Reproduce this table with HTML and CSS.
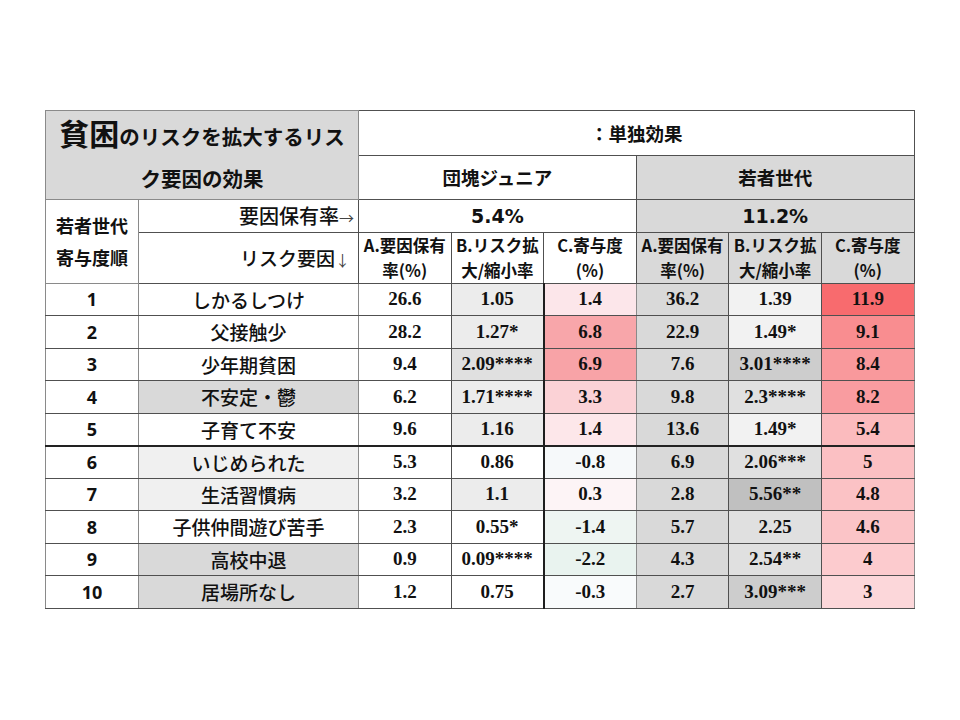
FILE: index.html
```html
<!DOCTYPE html>
<html lang="ja">
<head>
<meta charset="utf-8">
<link rel="stylesheet" href="styles.css">
</head>
<body>
<div class="page">
<table class="risk">
  <colgroup>
    <col class="c-rank"><col class="c-factor">
    <col class="c-val"><col class="c-val"><col class="c-val">
    <col class="c-val"><col class="c-val"><col class="c-val">
  </colgroup>
  <tr class="r-top">
    <th class="title g" colspan="2" rowspan="2"><span class="big">貧困</span>のリスクを拡大するリス<br>ク要因の効果</th>
    <th class="hd" colspan="6">：単独効果</th>
  </tr>
  <tr class="r-gen">
    <th class="hd" colspan="3">団塊ジュニア</th>
    <th class="hd g" colspan="3">若者世代</th>
  </tr>
  <tr class="r-rate">
    <th class="rank-hd" rowspan="2">若者世代<br>寄与度順</th>
    <th class="lab">要因保有率<span class="arr">→</span></th>
    <th class="pct" colspan="3">5.4%</th>
    <th class="pct g" colspan="3">11.2%</th>
  </tr>
  <tr class="r-cols">
    <th class="lab lab2">リスク要因<span class="arr">↓</span></th>
    <th class="ch">A.要因保有<br>率(%)</th>
    <th class="ch">B.リスク拡<br>大/縮小率</th>
    <th class="ch">C.寄与度<br>(%)</th>
    <th class="ch g">A.要因保有<br>率(%)</th>
    <th class="ch g">B.リスク拡<br>大/縮小率</th>
    <th class="ch g">C.寄与度<br>(%)</th>
  </tr>
  <tr>
    <td class="rank">1</td><td class="fac">しかるしつけ</td>
    <td class="num">26.6</td><td class="num b1">1.05</td><td class="num" style="background:#fce6ea">1.4</td>
    <td class="num g">36.2</td><td class="num b0">1.39</td><td class="num" style="background:#f86b6e">11.9</td>
  </tr>
  <tr>
    <td class="rank">2</td><td class="fac">父接触少</td>
    <td class="num">28.2</td><td class="num b1">1.27*</td><td class="num" style="background:#f8a6aa">6.8</td>
    <td class="num g">22.9</td><td class="num b0">1.49*</td><td class="num" style="background:#f98d90">9.1</td>
  </tr>
  <tr>
    <td class="rank">3</td><td class="fac">少年期貧困</td>
    <td class="num">9.4</td><td class="num b2">2.09****</td><td class="num" style="background:#f8a3a7">6.9</td>
    <td class="num g">7.6</td><td class="num b3">3.01****</td><td class="num" style="background:#f9999c">8.4</td>
  </tr>
  <tr>
    <td class="rank">4</td><td class="fac g">不安定・鬱</td>
    <td class="num">6.2</td><td class="num b1">1.71****</td><td class="num" style="background:#fbd2d6">3.3</td>
    <td class="num g">9.8</td><td class="num b2">2.3****</td><td class="num" style="background:#f99ca0">8.2</td>
  </tr>
  <tr class="sep">
    <td class="rank">5</td><td class="fac">子育て不安</td>
    <td class="num">9.6</td><td class="num b1">1.16</td><td class="num" style="background:#fde7ea">1.4</td>
    <td class="num g">13.6</td><td class="num b0">1.49*</td><td class="num" style="background:#fbbbbe">5.4</td>
  </tr>
  <tr>
    <td class="rank">6</td><td class="fac lg">いじめられた</td>
    <td class="num">5.3</td><td class="num">0.86</td><td class="num" style="background:#f6f9fa">-0.8</td>
    <td class="num g">6.9</td><td class="num b2">2.06***</td><td class="num" style="background:#fbc0c3">5</td>
  </tr>
  <tr>
    <td class="rank">7</td><td class="fac lg">生活習慣病</td>
    <td class="num">3.2</td><td class="num b1">1.1</td><td class="num" style="background:#fdf4f6">0.3</td>
    <td class="num g">2.8</td><td class="num b4">5.56**</td><td class="num" style="background:#fbc2c5">4.8</td>
  </tr>
  <tr>
    <td class="rank">8</td><td class="fac">子供仲間遊び苦手</td>
    <td class="num">2.3</td><td class="num">0.55*</td><td class="num" style="background:#eef5f2">-1.4</td>
    <td class="num g">5.7</td><td class="num b2">2.25</td><td class="num" style="background:#fbc4c7">4.6</td>
  </tr>
  <tr>
    <td class="rank">9</td><td class="fac g">高校中退</td>
    <td class="num">0.9</td><td class="num">0.09****</td><td class="num" style="background:#e9f3ef">-2.2</td>
    <td class="num g">4.3</td><td class="num b2">2.54**</td><td class="num" style="background:#fccbce">4</td>
  </tr>
  <tr>
    <td class="rank">10</td><td class="fac g">居場所なし</td>
    <td class="num">1.2</td><td class="num">0.75</td><td class="num" style="background:#f9fbfc">-0.3</td>
    <td class="num g">2.7</td><td class="num b3">3.09***</td><td class="num" style="background:#fcd7da">3</td>
  </tr>
</table>
</div>
</body>
</html>
```

FILE: styles.css
```css
html, body {
  margin: 0;
  padding: 0;
  background: #ffffff;
}
.page {
  padding: 110px 0 0 45px;
}
.risk {
  border-collapse: collapse;
  table-layout: fixed;
  width: 869px;
  font-family: "Noto Sans CJK JP", "Noto Sans", sans-serif;
  color: #111;
}
.c-rank { width: 93px; }
.c-factor { width: 220px; }
.c-val { width: 92.6px; }

.risk th, .risk td {
  border: 1px solid #505050;
  padding: 0;
  text-align: center;
  vertical-align: middle;
  overflow: hidden;
  white-space: nowrap;
}
.g { background: #d9d9d9; }
.lg { background: #f0f0f0; }

.r-top { height: 45px; }
.r-gen { height: 43px; }
.r-rate { height: 32px; }
.r-cols { height: 53px; }
.risk tr { height: 32.5px; }

.title {
  font-size: 20.5px;
  font-weight: 700;
  line-height: 42px;
  border-color: #8a8a8a !important;
}
.title .big { font-size: 30px; }
.hd {
  font-size: 18.5px;
  font-weight: 700;
}
.pct {
  font-family: "DejaVu Sans", "Liberation Sans", sans-serif;
  font-size: 19px;
  font-weight: 700;
}
.rank-hd {
  font-size: 18px;
  font-weight: 700;
  line-height: 32px;
  border-color: #8a8a8a !important;
}
.lab {
  text-align: right !important;
  font-size: 20px;
  font-weight: 500;
  padding-right: 4px !important;
  border-left-color: #8a8a8a !important;
}
.lab2 { font-size: 19px; padding-right: 8px !important; }
.arr {
  font-size: 15px;
  font-weight: 400;
  color: #444;
}
.ch {
  font-size: 16.5px;
  font-weight: 700;
  line-height: 25px;
}
.rank {
  font-size: 18px;
  font-weight: 700;
  font-family: "Open Sans", "Noto Sans", sans-serif;
}
.fac {
  font-size: 19px;
  font-weight: 500;
}
.num {
  font-family: "Liberation Serif", "Times New Roman", serif;
  font-size: 19px;
  font-weight: 700;
}
.b0 { background: #f2f2f2; }
.b1 { background: #ececec; }
.b2 { background: #e0e0e0; }
.b3 { background: #cdcdcd; }
.b4 { background: #c0c0c0; }

.risk td:nth-child(1) {
  border-left-color: #8a8a8a;
  border-right-color: #8a8a8a;
}
.risk td:nth-child(2) { border-right-color: #8a8a8a; }
.risk td:nth-child(4) { border-right: 2px solid #1e1e1e; }
.risk td:nth-child(5) { border-right-color: #8a8a8a; }
.risk td:nth-child(8) { border-right-color: #8a8a8a; }
.sep td { border-bottom: 2px solid #222; }
```
